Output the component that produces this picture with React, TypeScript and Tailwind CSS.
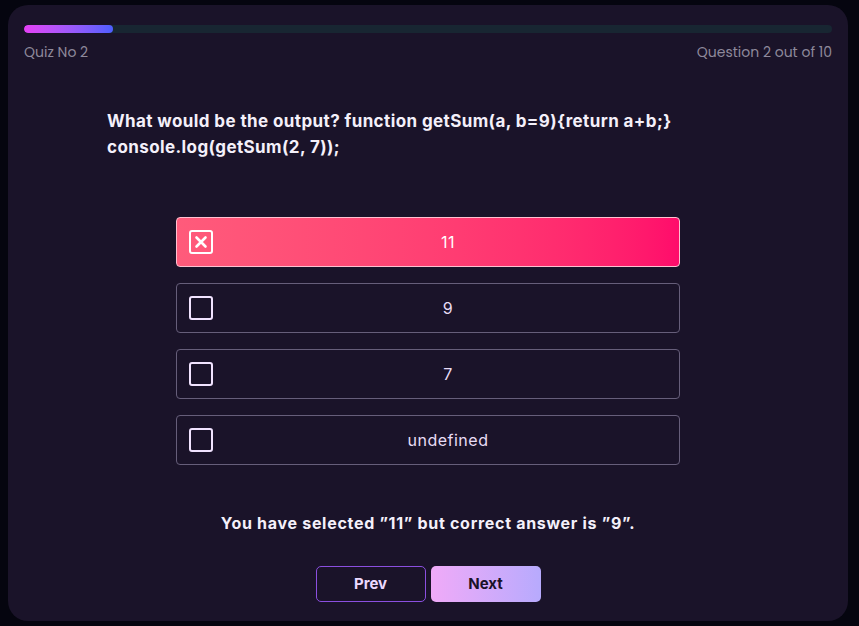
import { useState } from 'react';

const options = ['11', '9', '7', 'undefined'];

function CheckBox({ checked }: { checked: boolean }) {
  return (
    <div className={`w-6 h-6 shrink-0 rounded-[3px] border-2 flex items-center justify-center ${checked ? 'border-white' : 'border-[#f1e3ff]'}`}>
      {checked && (
        <svg width="14" height="14" viewBox="0 0 14 14" fill="none">
          <path d="M2.5 2.5 L11.5 11.5 M11.5 2.5 L2.5 11.5" stroke="white" strokeWidth="2.6" strokeLinecap="round" />
        </svg>
      )}
    </div>
  );
}

export default function App() {
  const [selected] = useState(0);

  return (
    <div className="min-h-[626px] bg-[#05050f] pl-2 pr-[11px] py-[5px] font-['Inter',sans-serif]">
      <div className="h-[616px] rounded-[20px] bg-[#1a1329] px-4 pt-5 flex flex-col">
        {/* Progress */}
        <div className="h-2 rounded-full bg-[#182632] overflow-hidden">
          <div className="h-full w-[11%] rounded-full bg-gradient-to-r from-[#e53ef5] to-[#4c5eff]" />
        </div>
        <div className="flex justify-between mt-[9px] text-[14px] text-[#8e899b] font-['Poppins','Inter',sans-serif]">
          <span>Quiz No 2</span>
          <span>Question 2 out of 10</span>
        </div>

        {/* Question */}
        <p className="mt-[45px] mx-[83px] text-[17px] leading-[26px] font-bold tracking-[0.4px] text-[#f4f0fa]">
          What would be the output? function getSum(a, b=9){'{'}return a+b;{'}'} console.log(getSum(2, 7));
        </p>

        {/* Options */}
        <div className="mt-[57px] w-[504px] mx-auto flex flex-col gap-4">
          {options.map((opt, i) => (
            <div
              key={opt}
              className={`h-[50px] rounded-[4px] border flex items-center pl-3 ${
                i === selected
                  ? 'border-[#ffc0d0] bg-gradient-to-r from-[#ff5b7b] to-[#ff0b6b] text-white'
                  : 'border-[#665e7a] text-[#e8dcf5]'
              }`}
            >
              <CheckBox checked={i === selected} />
              <span className="flex-1 ml-1 text-center text-[16px] tracking-[0.5px]">{opt}</span>
            </div>
          ))}
        </div>

        <p className="mt-[46px] text-center text-[16px] font-bold tracking-[0.7px] text-[#f4f0fa]">
          You have selected ”11” but correct answer is ”9”.
        </p>

        <div className="mt-[31px] flex justify-center gap-[5px]">
          <button className="w-[110px] h-9 rounded-[5px] border border-[#8b4fe0] text-[#ecd9ff] font-bold text-[15px]">
            Prev
          </button>
          <button className="w-[110px] h-9 rounded-[5px] bg-gradient-to-r from-[#f0aaf8] to-[#b7aafd] text-[#1a1329] font-bold text-[15px]">
            Next
          </button>
        </div>
      </div>
    </div>
  );
}
